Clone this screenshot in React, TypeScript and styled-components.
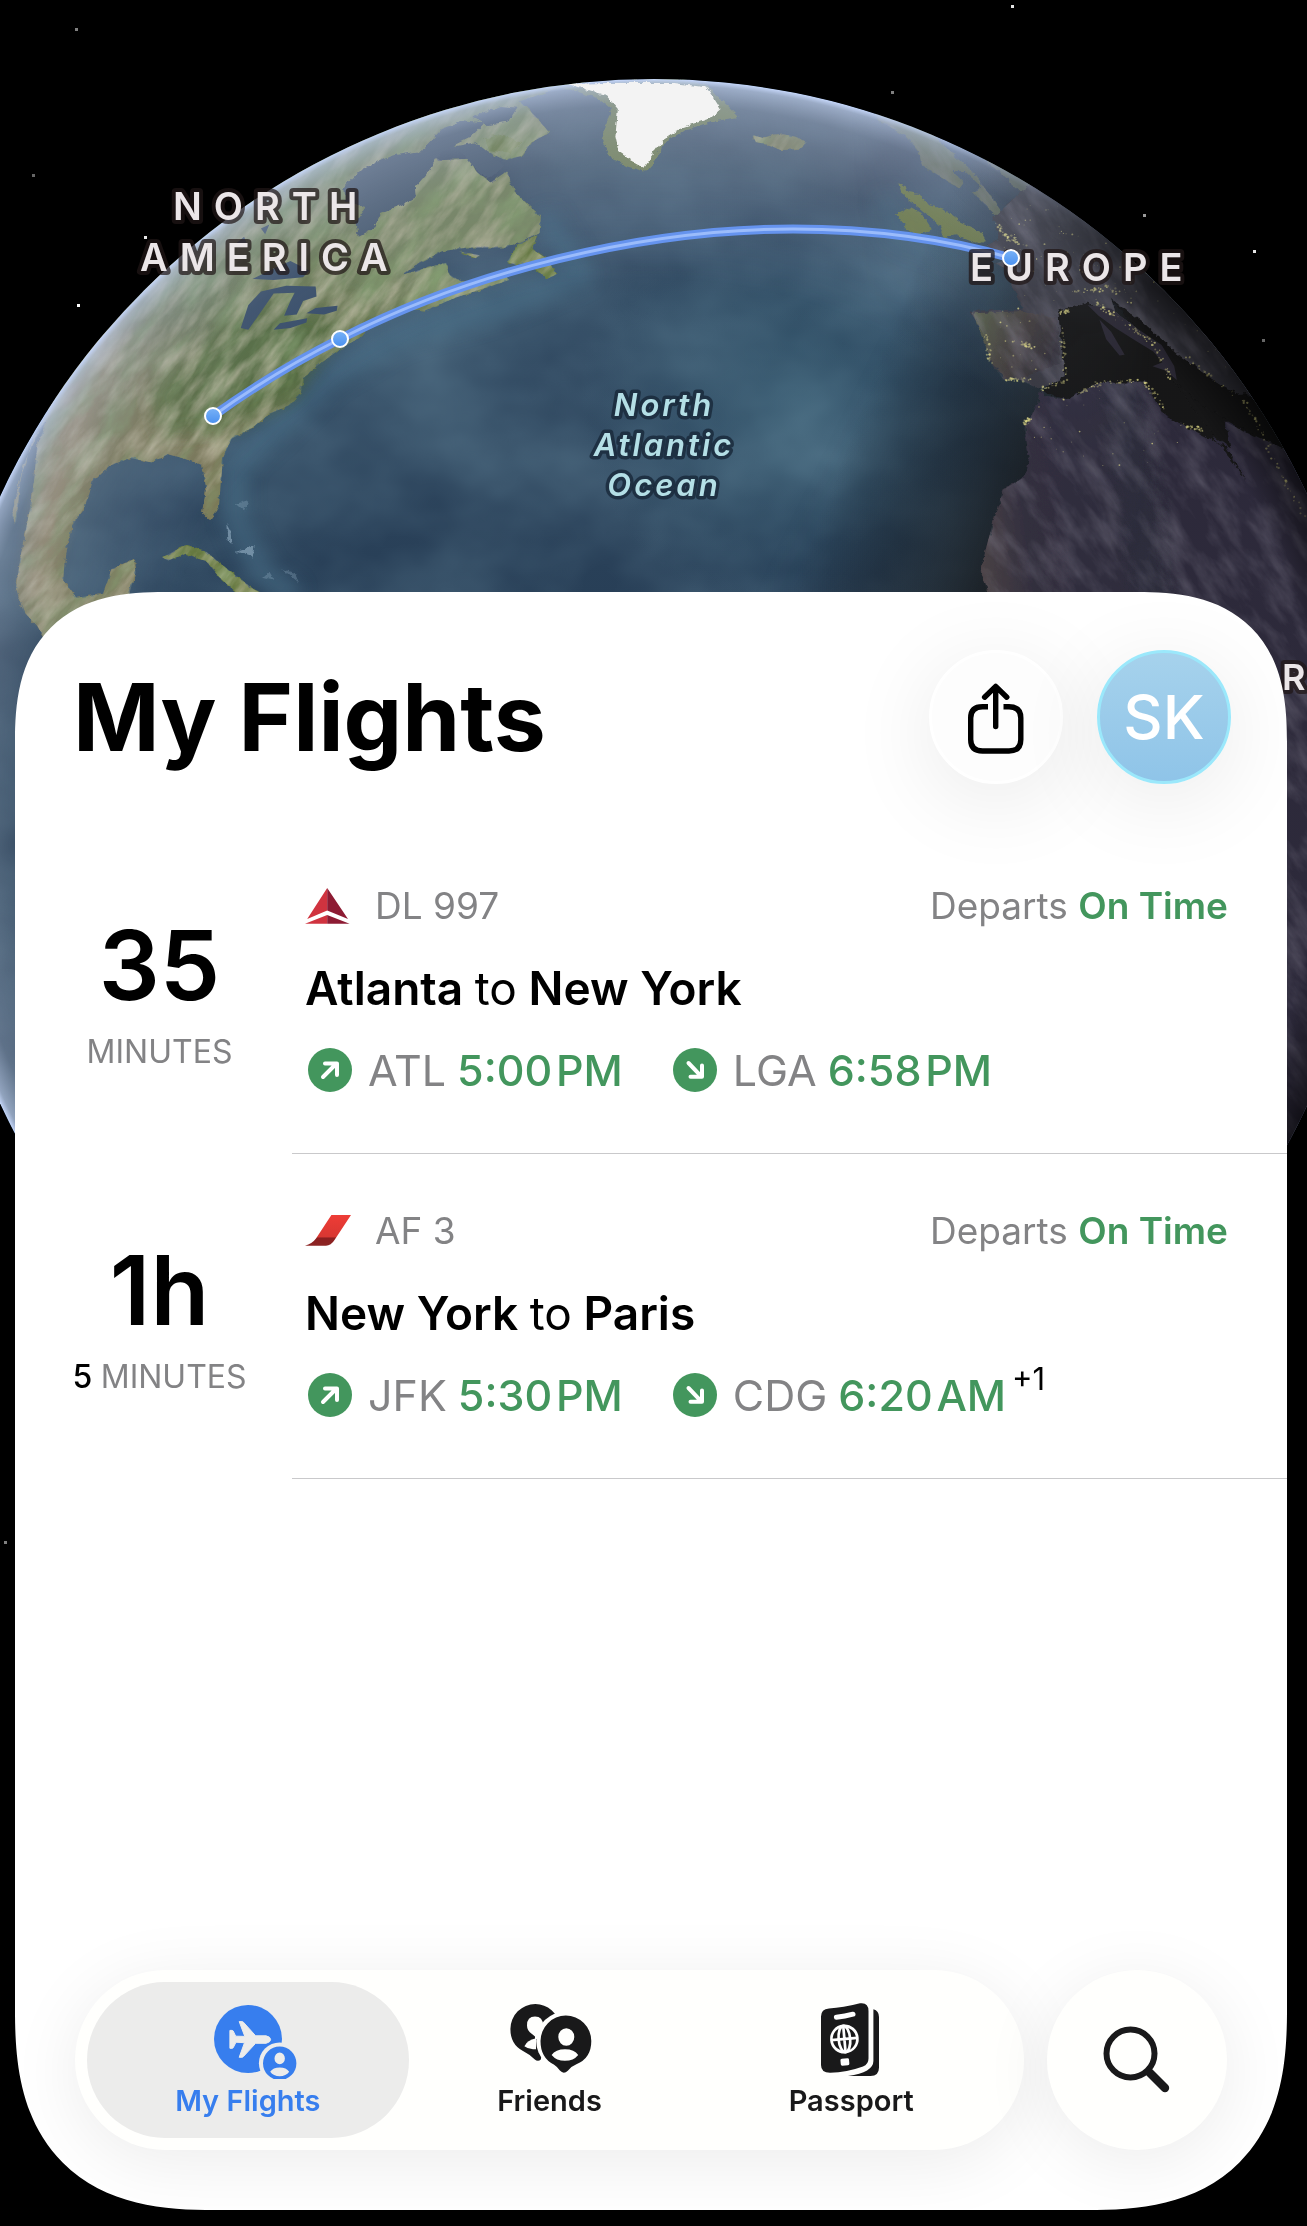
import React from 'react';
import styled, { createGlobalStyle } from 'styled-components';

const GREEN = '#43965d';
const GREY = '#838385';
const INK = '#19191a';

const GlobalStyle = createGlobalStyle`
  * { box-sizing: border-box; }
  body {
    margin: 0;
    background: #000;
    font-family: Inter, "Liberation Sans", sans-serif;
    color: #000;
  }
  button { font: inherit; color: inherit; border: 0; cursor: pointer; }
  a { color: inherit; text-decoration: none; }
`;

const Page = styled.main`
  position: relative;
  display: flex;
  flex-direction: column;
  min-height: 100vh;
  padding: 592px 20px 16px 15px;
  overflow: hidden;
`;

const Globe = styled.svg`
  position: absolute;
  top: 0;
  left: 50%;
  width: 1307px;
  height: 1600px;
  margin-left: -654px;
  overflow: visible;
`;

const Sheet = styled.section`
  position: relative;
  display: flex;
  flex: 1;
  flex-direction: column;
  padding: 58px 0 60px;
  background: #fff;
  overflow: hidden;
  border-radius: 115px 115px 150px 150px;
  @supports (corner-shape: superellipse(1.3)) {
    border-radius: 150px 150px 200px 200px;
    corner-shape: superellipse(1.35);
  }
`;

const Header = styled.header`
  display: flex;
  align-items: center;
  justify-content: space-between;
  padding: 0 56px 0 58px;
`;

const Title = styled.h1`
  margin: 0;
  font-size: 93px;
  line-height: 120px;
  font-weight: 700;
`;

const Actions = styled.div`
  display: flex;
  gap: 34px;
`;

const RoundButton = styled.button<{ $avatar?: boolean }>`
  display: flex;
  align-items: center;
  justify-content: center;
  width: 134px;
  height: 134px;
  padding: 0;
  border-radius: 50%;
  font-size: 61px;
  font-weight: 500;
  color: ${(p) => (p.$avatar ? '#fff' : '#000')};
  background: ${(p) => (p.$avatar ? 'linear-gradient(#a6d2ec, #8fc4e8)' : '#fdfdfd')};
  border: 3px solid ${(p) => (p.$avatar ? '#9be8fb' : '#fff')};
  box-shadow: 0 16px 90px rgba(0, 0, 0, 0.09);
`;

const List = styled.ul`
  margin: 45px 0 0;
  padding: 0;
  list-style: none;
`;

const Row = styled.li`
  display: grid;
  grid-template-columns: 277px 1fr;
`;

const Countdown = styled.div`
  display: flex;
  flex-direction: column;
  align-items: center;
  gap: 21px;
  padding: 88px 0 0 12px;
`;

const Big = styled.strong`
  font-size: 96px;
  line-height: 96px;
  font-weight: 600;
`;

const Unit = styled.span`
  font-size: 32px;
  line-height: 36px;
  color: ${GREY};
  b { font-weight: 500; color: #000; }
`;

const Body = styled.div`
  display: flex;
  flex-direction: column;
  gap: 32px;
  padding: 55px 59px 61px 13px;
  border-bottom: 1px solid #c9c9cb;
`;

const Meta = styled.div`
  display: flex;
  align-items: center;
  font-size: 37px;
  line-height: 44px;
  color: ${GREY};
`;

const Logo = styled.svg`
  width: 46px;
  height: 38px;
  margin-right: 24px;
`;

const Status = styled.span`
  margin-left: auto;
  b { font-weight: 600; color: ${GREEN}; }
`;

const Route = styled.h2`
  margin: 0;
  font-size: 46px;
  line-height: 56px;
  font-weight: 600;
  span { font-weight: 400; }
`;

const Legs = styled.div`
  display: flex;
  gap: 50px;
  padding-left: 3px;
`;

const Leg = styled.div`
  display: flex;
  align-items: center;
  font-size: 43px;
  line-height: 44px;
  color: ${GREY};
  time { margin-left: 11px; font-weight: 500; color: ${GREEN}; }
`;

const LegIcon = styled.svg`
  width: 44px;
  height: 44px;
  margin-right: 16px;
`;

const DayShift = styled.small`
  align-self: flex-start;
  margin-left: 6px;
  font-size: 31px;
  line-height: 12px;
  color: #000;
`;

const Dock = styled.div`
  display: flex;
  gap: 23px;
  margin-top: auto;
  padding: 0 60px;
`;

const Tabs = styled.nav`
  display: flex;
  flex: 1;
  height: 180px;
  padding: 12px;
  border-radius: 90px;
  background: #fffffd;
  box-shadow: 0 12px 70px rgba(0, 0, 0, 0.08);
`;

const Tab = styled.a<{ $active?: boolean }>`
  display: flex;
  flex: 1 1 0;
  flex-direction: column;
  align-items: center;
  gap: 5px;
  padding-top: 21px;
  border-radius: 78px;
  background: ${(p) => (p.$active ? '#ececeb' : 'transparent')};
  color: ${(p) => (p.$active ? '#377eee' : INK)};
  font-size: 29px;
  line-height: 34px;
  font-weight: 600;
  & + & { margin-left: -20px; }
  svg { width: 100px; height: 76px; }
`;

const SearchButton = styled.button`
  display: flex;
  align-items: center;
  justify-content: center;
  width: 180px;
  height: 180px;
  padding: 0;
  border-radius: 50%;
  background: #fffffd;
  color: ${INK};
  box-shadow: 0 12px 70px rgba(0, 0, 0, 0.08);
`;

const Continent = styled.text<{ $single?: boolean }>`
  font-family: Inter, "Liberation Sans", sans-serif;
  font-size: ${(p) => (p.$single ? 36 : 38)}px;
  font-weight: 600;
  letter-spacing: ${(p) => (p.$single ? 0 : 12)}px;
  fill: #ebe6e8;
  stroke: rgba(32, 22, 22, 0.72);
  stroke-width: 8px;
  stroke-linejoin: round;
  paint-order: stroke;
`;

const Ocean = styled.text`
  font-family: Inter, "Liberation Sans", sans-serif;
  font-size: 31px;
  font-style: italic;
  font-weight: 600;
  letter-spacing: 3px;
  text-anchor: middle;
  fill: #b4dfe6;
  stroke: rgba(26, 42, 60, 0.85);
  stroke-width: 7px;
  stroke-linejoin: round;
  paint-order: stroke;
`;

/* ---- globe drawing ---- */

const MAP_SCALE = 'translate(0 60) scale(0.4209 0.3827)';

const NORTH_AMERICA =
  'M-100,-100L1450,40L1330,72L1235,108L1275,150L1305,190L1262,215L1240,250L1200,262L1160,240L1100,232L1060,215L1010,235L1045,262L1115,258L1130,290L1165,320L1205,290L1222,345L1250,375L1285,410L1282,452L1240,472L1200,490L1110,490L1050,500L1000,528L955,562L1010,545L1060,530L1066,560L1100,580L1150,578L1195,556L1210,575L1140,600L1080,622L1010,655L960,650L900,672L862,720L800,762L752,800L720,832L715,870L690,900L640,925L600,960L550,990L530,1040L525,1100L520,1170L500,1202L480,1180L490,1120L480,1058L440,1042L400,1030L360,1052L310,1040L260,1060L220,1100L205,1160L170,1220L155,1290L150,1360L182,1405L245,1395L265,1330L318,1305L322,1340L300,1420L240,1600L130,1560L90,1480L55,1440L38,1380L50,1290L70,1180L82,1090L88,1010L112,940L80,985L50,1090L38,1210L28,1190L55,1060L100,950L140,860L-100,860Z';
const HUDSON =
  'M818,330L860,285L930,250L1000,238L1050,180L1100,160L1150,165L1120,200L1075,225L1035,258L1012,300L988,330L990,358L940,385L905,400L888,440L850,462L845,425L870,385L820,368Z M1120,150L1190,120L1230,125L1210,160L1160,170Z M1085,225L1130,215L1170,250L1200,275L1160,312L1130,285Z';
const LAKES =
  'M572,700L590,640L620,605L680,590L750,592L752,618L720,630L705,665L675,668L690,630L700,608L650,610L625,650L590,705Z M650,705L665,688L730,675L728,686L690,700Z M728,662L750,648L802,642L800,655L770,665Z M600,572L650,545L690,525L735,550L720,568L650,575Z M560,480L580,462L590,490Z M620,440L640,430L630,455Z';
const ISLANDS =
  'M1205,528L1232,480L1275,458L1265,495L1300,520L1322,560L1300,572L1255,530L1225,535Z M1090,500L1140,510L1130,518Z M385,1300L440,1268L490,1285L540,1330L605,1385L640,1400L560,1390L520,1350L490,1310L440,1290L400,1308Z M1150,205L1190,195L1240,215L1210,245L1160,235Z M1070,180L1090,165L1120,185Z';
const ICELAND = 'M1788,196L1812,204L1834,198L1862,194L1895,202L1916,216L1900,232L1856,236L1826,222L1796,214Z';
const BRITAIN =
  'M2132,322L2152,330L2156,345L2184,350L2204,378L2244,392L2284,425L2330,448L2342,470L2318,480L2270,458L2244,466L2232,430L2186,388L2140,348Z M2128,402L2164,385L2190,400L2214,442L2180,462L2156,440Z';
const SCANDINAVIA =
  'M2075,130L2088,158L2154,200L2184,240L2190,275L2242,310L2280,335L2290,320L2262,290L2292,290L2330,330L2312,348L2370,410L2395,415L2350,350L2310,290L2240,220L2205,180L2240,170L2320,240L2460,380L2600,360L2300,120Z';
const EUROPE =
  'M2360,412L2366,430L2372,470L2344,484L2396,520L2364,532L2390,545L2404,592L2430,652L2312,655L2308,662L2344,730L2349,782L2384,835L2424,836L2460,856L2496,850L2530,828L2530,770L2518,720L2530,690L2514,655L2552,650L2584,632L2610,655L2664,695L2704,720L2744,752L2764,795L2784,832L2760,760L2700,700L2650,660L2640,622L2720,700L2790,780L2850,850L2900,880L2960,870L3100,1000L3100,300L2440,330Z';
const AFRICA =
  'M2470,862L2464,905L2434,960L2444,1040L2434,1090L2384,1122L2364,1190L2344,1270L2330,1335L2348,1400L2420,1500L2500,2900L3400,2900L3200,1100L3040,1010L3010,975L2980,985L2912,945L2924,1015L2860,965L2812,950L2768,920L2752,870L2718,836L2674,846L2612,840L2572,862L2532,888L2484,876Z';
const GREENLAND =
  'M1330,68L1420,100L1452,128L1440,170L1430,210L1450,255L1490,278L1535,292L1560,262L1572,222L1622,186L1690,162L1755,148L1732,122L1700,92L1680,65L1600,46Z';
const MED =
  'M2514,655L2584,632L2664,695L2744,752L2784,832L2960,1100L2912,1010L2768,930L2718,836L2612,840L2532,888L2470,862L2496,850L2530,828Z M2640,625L2720,690L2800,770L2900,850L3000,900L3080,1030L2990,985L2850,900L2784,832L2764,780Z';
const ITALY =
  'M2584,640L2640,650L2700,700L2760,745L2790,800L2796,836L2770,812L2738,800L2762,790L2740,762L2700,735L2650,700L2610,668Z M2612,678L2640,710L2672,770L2660,772L2628,730Z';

const COAST_LIGHTS: number[][] = [
  [2370, 430, 2400, 480], [2380, 450, 2440, 490], [2550, 605, 2620, 600], [2590, 620, 2660, 680],
  [2660, 680, 2740, 740], [2740, 740, 2780, 830], [2518, 660, 2545, 655], [2520, 700, 2530, 820],
  [2344, 720, 2352, 790], [2390, 835, 2450, 835], [2470, 860, 2530, 840], [2565, 870, 2610, 845],
  [2610, 845, 2710, 835], [2720, 840, 2765, 910], [2810, 955, 2860, 965], [2810, 770, 2960, 900],
  [2435, 950, 2450, 930], [2560, 540, 2700, 640], [2960, 900, 3020, 1010], [3010, 1010, 3110, 1220],
  [2430, 740, 2450, 750],
];

function random(seed: number) {
  let s = seed;
  return () => {
    s = (s * 16807) % 2147483647;
    return s / 2147483647;
  };
}

const rnd = random(77);
const lights = COAST_LIGHTS.flatMap(([x1, y1, x2, y2]) =>
  Array.from({ length: 24 }, () => {
    const t = rnd();
    return {
      x: x1 + (x2 - x1) * t + (rnd() - 0.5) * 12,
      y: y1 + (y2 - y1) * t + (rnd() - 0.5) * 10,
      r: 1 + rnd() * 2.2,
      o: 0.25 + rnd() * 0.45,
    };
  }),
).concat(
  Array.from({ length: 230 }, () => ({
    x: 2370 + rnd() * 620,
    y: 380 + rnd() * 440,
    r: 0.8 + rnd() * 1.6,
    o: 0.2 + rnd() * 0.6,
  })).filter((p) => p.y < 610 || p.x < 2510 || p.x > 2760 + (p.y - 640) * 0.9),
  Array.from({ length: 36 }, () => ({
    x: 2450 + rnd() * 380,
    y: 860 + rnd() * 200,
    r: 0.8 + rnd() * 1.6,
    o: 0.2 + rnd() * 0.5,
  })).filter((p) => p.x < 2740 || p.y > 960),
);

const STARS = [
  [75, 28, 0.5], [1011, 5, 0.9], [891, 91, 0.5], [32, 174, 0.4], [144, 236, 0.9], [77, 304, 1],
  [1143, 214, 0.6], [1253, 250, 0.9], [1262, 339, 0.4], [4, 1541, 0.5], [1080, 220, 0.5],
];

const STOPS = [[213, 416], [340, 339], [1011, 258]];
const ARC = 'M213,416Q274,372 340,339C470,272 640,229 793,229C872,229 942,238 1011,258';

function Earth() {
  return (
    <Globe viewBox="0 0 1307 1600" role="img" aria-label="Flight map">
      <defs>
        <clipPath id="disc"><circle cx="654" cy="800" r="721" /></clipPath>
        <clipPath id="america"><path d={NORTH_AMERICA + ISLANDS + BRITAIN + ICELAND} transform={MAP_SCALE} /></clipPath>
        <clipPath id="nightLand"><path d={SCANDINAVIA + EUROPE + AFRICA} transform={MAP_SCALE} /></clipPath>
        <linearGradient id="sea" x1="0" y1="79" x2="0" y2="600" gradientUnits="userSpaceOnUse">
          <stop offset="0" stopColor="#56667f" />
          <stop offset="0.15" stopColor="#43546c" />
          <stop offset="0.42" stopColor="#2f475f" />
          <stop offset="1" stopColor="#283f57" />
        </linearGradient>
        <linearGradient id="land" x1="60" y1="600" x2="480" y2="100" gradientUnits="userSpaceOnUse">
          <stop offset="0" stopColor="#7a7757" />
          <stop offset="0.35" stopColor="#667550" />
          <stop offset="0.7" stopColor="#67764d" />
          <stop offset="1" stopColor="#758460" />
        </linearGradient>
        <linearGradient id="iberia" x1="2310" y1="660" x2="2530" y2="740" gradientUnits="userSpaceOnUse">
          <stop offset="0" stopColor="#5f6850" />
          <stop offset="0.5" stopColor="#4b4543" />
          <stop offset="1" stopColor="#33303a" />
        </linearGradient>
        <linearGradient id="africa" x1="2330" y1="1300" x2="2800" y2="1240" gradientUnits="userSpaceOnUse">
          <stop offset="0" stopColor="#53494d" />
          <stop offset="0.25" stopColor="#383445" />
          <stop offset="1" stopColor="#312f43" />
        </linearGradient>
        <radialGradient id="haze" cx="654" cy="800" r="721" gradientUnits="userSpaceOnUse">
          <stop offset="0.72" stopColor="#8b9cc4" stopOpacity="0" />
          <stop offset="0.88" stopColor="#929dae" stopOpacity="0.16" />
          <stop offset="0.965" stopColor="#a5b1c8" stopOpacity="0.42" />
          <stop offset="0.992" stopColor="#b5c4e0" stopOpacity="0.72" />
          <stop offset="1" stopColor="#c6d7fa" stopOpacity="1" />
        </radialGradient>
        <linearGradient id="day" x1="0" y1="0" x2="1307" y2="0" gradientUnits="userSpaceOnUse">
          <stop offset="0" stopColor="#fff" />
          <stop offset="0.65" stopColor="#fff" />
          <stop offset="0.76" stopColor="#aaa" />
          <stop offset="0.88" stopColor="#000" />
        </linearGradient>
        <mask id="daySide" maskUnits="userSpaceOnUse" x="-80" y="0" width="1500" height="1600">
          <rect x="-80" width="1500" height="1600" fill="url(#day)" />
        </mask>
        <linearGradient id="night" x1="900" y1="290" x2="1130" y2="402" gradientUnits="userSpaceOnUse">
          <stop offset="0" stopColor="#17181d" stopOpacity="0" />
          <stop offset="0.5" stopColor="#17181d" stopOpacity="0.35" />
          <stop offset="1" stopColor="#17171b" stopOpacity="0.55" />
        </linearGradient>
        <linearGradient id="seaNight" x1="880" y1="360" x2="1090" y2="440" gradientUnits="userSpaceOnUse">
          <stop offset="0" stopColor="#161b20" stopOpacity="0" />
          <stop offset="0.5" stopColor="#161b20" stopOpacity="0.5" />
          <stop offset="1" stopColor="#161616" stopOpacity="1" />
        </linearGradient>
        <radialGradient id="edge" cx="654" cy="800" r="721" gradientUnits="userSpaceOnUse">
          <stop offset="0.93" stopColor="#000" stopOpacity="0" />
          <stop offset="1" stopColor="#000" stopOpacity="0.6" />
        </radialGradient>
        <linearGradient id="dusk" x1="950" y1="0" x2="1150" y2="0" gradientUnits="userSpaceOnUse">
          <stop offset="0" stopColor="#000" />
          <stop offset="1" stopColor="#fff" />
        </linearGradient>
        <mask id="nightSide" maskUnits="userSpaceOnUse" x="-80" y="0" width="1500" height="1600">
          <rect x="-80" width="1500" height="1600" fill="url(#dusk)" />
        </mask>
        <radialGradient id="ridge" cx="800" cy="400" r="220" gradientUnits="userSpaceOnUse">
          <stop offset="0" stopColor="#345f74" stopOpacity="0.5" />
          <stop offset="1" stopColor="#345f74" stopOpacity="0" />
        </radialGradient>
        <filter id="coast" x="-5%" y="-5%" width="110%" height="110%">
          <feTurbulence type="fractalNoise" baseFrequency="0.06" numOctaves="4" seed="8" result="n" />
          <feDisplacementMap in="SourceGraphic" in2="n" scale="14" xChannelSelector="R" yChannelSelector="G" />
        </filter>
        <filter id="tanStreaks" x="0" y="0" width="100%" height="100%">
          <feTurbulence type="fractalNoise" baseFrequency="0.022 0.08" numOctaves="5" seed="4" />
          <feColorMatrix type="matrix" values="0 0 0 0 0.62  0 0 0 0 0.57  0 0 0 0 0.43  1.3 0 0 0 -0.5" />
        </filter>
        <filter id="darkStreaks" x="0" y="0" width="100%" height="100%">
          <feTurbulence type="fractalNoise" baseFrequency="0.02 0.05" numOctaves="5" seed="31" />
          <feColorMatrix type="matrix" values="0 0 0 0 0.24  0 0 0 0 0.36  0 0 0 0 0.16  0 1.5 0 0 -0.6" />
        </filter>
        <filter id="nightStreaks" x="0" y="0" width="100%" height="100%">
          <feTurbulence type="fractalNoise" baseFrequency="0.02 0.06" numOctaves="5" seed="12" />
          <feColorMatrix type="matrix" values="0 0 0 0 0.33  0 0 0 0 0.31  0 0 0 0 0.4  1.2 0 0 0 -0.48" />
        </filter>
        <filter id="seaTexture" x="0" y="0" width="100%" height="100%">
          <feTurbulence type="fractalNoise" baseFrequency="0.006 0.008" numOctaves="4" seed="21" />
          <feColorMatrix type="matrix" values="0 0 0 0 0.2  0 0 0 0 0.36  0 0 0 0 0.46  0.6 0 0 0 -0.15" />
        </filter>
        <filter id="soft" x="-30%" y="-30%" width="160%" height="160%"><feGaussianBlur stdDeviation="22" /></filter>
        <linearGradient id="pin" x1="0" y1="0" x2="0" y2="1">
          <stop offset="0" stopColor="#79b2f7" />
          <stop offset="1" stopColor="#4990f0" />
        </linearGradient>
      </defs>

      {STARS.map(([x, y, o]) => (
        <rect key={`${x}-${y}`} x={x} y={y} width="3" height="3" fill="#fff" opacity={o} />
      ))}

      <g clipPath="url(#disc)">
        <rect x="-80" y="60" width="1500" height="1500" fill="url(#sea)" />
        <circle cx="800" cy="400" r="220" fill="url(#ridge)" />
        <rect x="-80" y="79" width="1480" height="1200" filter="url(#seaTexture)" />
        <g transform={MAP_SCALE}>
          <g fill="none" stroke="#4a6f88" strokeWidth="60" strokeLinejoin="round" opacity="0.55" filter="url(#soft)">
            <path d="M1290,400L1380,560L1180,650L950,720L780,830L640,980L560,1060L560,1200L620,1340L700,1400" />
            <path d="M2100,350L2140,460L2300,520L2380,600" opacity="0.6" />
          </g>
        </g>
        <rect x="-80" y="60" width="1500" height="1500" fill="url(#seaNight)" />
        <g transform={MAP_SCALE} filter="url(#coast)">
          <path d={NORTH_AMERICA} fill="url(#land)" />
          <path d={ISLANDS} fill="#66793f" />
          <path d={BRITAIN} fill="#6f7d4e" />
          <path d={ICELAND} fill="#7d8164" />
          <path d={SCANDINAVIA} fill="#5f6b58" />
          <path d={EUROPE} fill="#3c3d47" />
          <path d={AFRICA} fill="url(#africa)" />
        </g>
        <g transform={MAP_SCALE}>
          <path d="M140,880L240,700L330,600L240,860L190,1060L150,1180L120,1330L90,1440L60,1380L90,1150Z" fill="#9b8768" opacity="0.7" filter="url(#soft)" />
          <path d="M350,860L600,640L820,680L700,880L560,960L380,980Z" fill="#4c6636" opacity="0.7" filter="url(#soft)" />
          <path d="M2312,662L2430,656L2510,675L2520,790L2430,830L2384,830L2352,780Z" fill="url(#iberia)" filter="url(#coast)" />
        </g>
        <g clipPath="url(#america)">
          <rect x="-500" y="-400" width="1400" height="1100" transform="rotate(-52 250 350)" filter="url(#darkStreaks)" />
          <rect x="-500" y="-400" width="1400" height="1100" transform="rotate(-52 250 350)" filter="url(#tanStreaks)" />
        </g>
        <g clipPath="url(#nightLand)" opacity="0.7">
          <rect x="300" y="-300" width="1600" height="1700" transform="rotate(55 1100 500)" filter="url(#nightStreaks)" />
        </g>
        <g transform={MAP_SCALE}>
          <path d={HUDSON} fill="#4a5b73" filter="url(#coast)" />
          <path d={LAKES} fill="#344a66" />
          <path d={MED} fill="#161616" filter="url(#coast)" />
          <path d={ITALY} fill="#2e2b38" />
          <path d={GREENLAND} fill="#7c8a66" filter="url(#coast)" />
          <g fill="#a9c4d8" opacity="0.5">
            <path d="M538,1210L548,1230L550,1265L540,1255Z M560,1285L605,1270L600,1300Z" filter="url(#coast)" />
            <path d="M620,1350L640,1340L650,1358Z M670,1330L700,1340L710,1365Z M560,1160L590,1150L580,1180Z" opacity="0.5" filter="url(#coast)" />
          </g>
        </g>
        <rect x="-80" y="60" width="1500" height="1500" fill="url(#night)" opacity="0.35" />
        <g transform={MAP_SCALE} fill="#e3dd8a">
          {lights.map((p, i) => (
            <circle key={i} cx={p.x} cy={p.y} r={p.r} opacity={p.o} />
          ))}
        </g>
        <circle cx="654" cy="800" r="721" fill="url(#haze)" mask="url(#daySide)" />
        <path
          transform={MAP_SCALE}
          filter="url(#coast)"
          d="M1350,62L1440,92L1468,128L1462,200L1470,240L1500,262L1530,280L1552,244L1575,210L1622,176L1690,150L1712,128L1680,72L1600,60L1450,60Z"
          fill="#f3f3f3"
        />
        <circle cx="654" cy="800" r="721" fill="url(#edge)" mask="url(#nightSide)" />
      </g>

      <path d={ARC} fill="none" stroke="#6593ee" strokeWidth="9" strokeLinecap="round" />
      <path d={ARC} fill="none" stroke="#9bbcfb" strokeWidth="3" strokeLinecap="round" />

      <Continent x="173" y="220">NORTH</Continent>
      <Continent x="140" y="271">AMERICA</Continent>
      <Continent x="970" y="281">EUROPE</Continent>
      <Continent $single x="1282" y="690">R</Continent>
      <Ocean x="664" y="416">North</Ocean>
      <Ocean x="664" y="456">Atlantic</Ocean>
      <Ocean x="664" y="496">Ocean</Ocean>

      {STOPS.map(([x, y]) => (
        <circle key={x} cx={x} cy={y} r="8" fill="url(#pin)" stroke="#fff" strokeWidth="2" />
      ))}
    </Globe>
  );
}

/* ---- icons ---- */

const ShareIcon = () => (
  <svg width="58" height="76" viewBox="0 -4 58 76" fill="none" stroke="currentColor" strokeWidth="5.4" strokeLinecap="round" strokeLinejoin="round" aria-hidden="true">
    <path strokeLinecap="butt" d="M21,23.8H15.5Q3.7,23.8 3.7,35V56.5Q3.7,68 15.5,68H42Q53.8,68 53.8,56.5V35Q53.8,23.8 42,23.8H36.5" />
    <path d="M28.7,4V43.5M17.6,14.2L28.7,3.4L39.8,14.2" />
  </svg>
);

const DeltaLogo = () => (
  <Logo viewBox="0 -1 46 38" aria-hidden="true">
    <path d="M22.2,0L2.2,31L22.2,22.6ZM0,35.7L22.2,27V35.7Z" fill="#d0333f" />
    <path d="M22.2,0L43,31L22.2,22.6ZM44.6,35.7L22.2,27V35.7Z" fill="#8d1b33" />
  </Logo>
);

const AirFranceLogo = () => (
  <Logo viewBox="0 -3 46 38" aria-hidden="true">
    <defs>
      <linearGradient id="af" x1="0" y1="0" x2="0" y2="1">
        <stop offset="0" stopColor="#ee3c36" />
        <stop offset="0.7" stopColor="#d93732" />
        <stop offset="0.76" stopColor="#8c1f20" />
        <stop offset="1" stopColor="#8c2524" />
      </linearGradient>
    </defs>
    <path d="M26.4,0H46L29.5,25Q26,30.7 21,30.7H0Q7,29 11,23.6Z" fill="url(#af)" />
  </Logo>
);

const ArrowBadge = ({ down }: { down?: boolean }) => (
  <LegIcon viewBox="0 0 44 44" aria-label={down ? 'Arrives' : 'Departs'}>
    <circle cx="22" cy="22" r="22" fill={GREEN} />
    <path
      d={down ? 'M15.5,15L28,28.2M29,17.5V28.8H17.5' : 'M15,29L28,16M17,15.5H29V27'}
      fill="none" stroke="#fff" strokeWidth="4" strokeLinecap="round" strokeLinejoin="round"
    />
  </LegIcon>
);

const FlightsIcon = () => (
  <svg viewBox="-16 -2 100 76" aria-hidden="true">
    <mask id="flightCut" maskUnits="userSpaceOnUse" x="-16" y="-2" width="100" height="76">
      <rect x="-16" y="-2" width="100" height="76" fill="#fff" />
      <circle cx="65.7" cy="58.3" r="20.8" />
      <path stroke="#000" strokeWidth="1" strokeLinejoin="round" d="M52,30.8H41.6L29.4,17.2Q28.8,16.6 27.9,16.6H25.2L30.8,31.4L21.7,31.2L19.2,26Q18.9,25.4 18,25.4H15.9V43.3H18Q18.9,43.3 19.2,42.7L22,37.2L30.5,37.7L25.2,52.3H27.9Q28.8,52.3 29.4,51.6L41.6,38.3H52Q56.6,37.2 56.6,34.6Q56.6,31.8 52,30.8Z" />
    </mask>
    <circle cx="34" cy="34" r="34" fill="currentColor" mask="url(#flightCut)" />
    <path fillRule="evenodd" fill="currentColor" d="M49,58.3a16.7,16.7 0 1 0 33.4,0a16.7,16.7 0 1 0 -33.4,0ZM60.5,53.4a5.2,5.8 0 1 1 10.4,0a5.2,5.8 0 1 1 -10.4,0ZM56.2,66.8Q59,62.4 65.7,62.4Q72.4,62.4 75.2,66.8Q72,71.2 65.7,71.2Q59.4,71.2 56.2,66.8Z" />
  </svg>
);

const FriendsIcon = () => (
  <svg viewBox="-9 0 100 76" aria-hidden="true">
    <mask id="friendCut" maskUnits="userSpaceOnUse" x="-9" y="0" width="100" height="76">
      <rect x="-9" width="100" height="76" fill="#fff" />
      <circle cx="56.8" cy="38" r="29.6" />
      <path d="M18,22.5Q18,13.6 26,13.6Q34,13.6 34,22.5Q34,28 31,31.5V36H26V33.5L23,31Q18,28 18,22.5Z" />
      <path d="M15.4,43.2Q18,37 27,35.2V46.2H24Q18.5,45.8 15.4,43.2Z" />
    </mask>
    <path mask="url(#friendCut)" fill="currentColor" d="M26.4,1A25,25 0 0 0 1.4,26Q1.4,41.5 14,48Q21,51.6 25.5,56.2Q29,59.2 31.8,56.5L33,50A25,25 0 0 0 26.4,1Z" />
    <path fillRule="evenodd" fill="currentColor" d="M56.8,12.6A25.5,25.5 0 0 1 82.3,38.1Q82.3,55.5 67.4,61.2Q62.5,63 58.8,67.8Q54.6,71.6 50.9,67.6Q48,63.6 44.8,61.6Q31.5,55 31.5,38.1A25.5,25.5 0 0 1 56.8,12.6ZM49.3,34a8,8.8 0 1 0 16,0a8,8.8 0 1 0 -16,0ZM42.6,51.9Q46.5,46.3 56,46.3Q65.5,46.3 69.2,51.9Q64.5,57.8 56,57.8Q47.5,57.8 42.6,51.9Z" />
  </svg>
);

const PassportIcon = () => (
  <svg viewBox="-20 0 100 76" fill="none" aria-hidden="true">
    <path fill="currentColor" d="M8,5.4Q22,4.8 39,0.3Q47.5,-0.8 47.5,8V55.6Q47.5,61.5 42,63.6Q26,69.4 9,69.8Q0,69.8 0,62V13.5Q0,6 8,5.4Z" />
    <path fill="currentColor" d="M52.4,6.2Q58,7.8 58,14V64.5Q58,73 49.5,73H27Q52.4,69.4 52.4,58Z" />
    <g stroke="#fff">
      <path d="M15.4,14.2Q24,13.5 32,11.2" strokeWidth="5" strokeLinecap="round" />
      <g strokeWidth="2.7" transform="rotate(-5 23.4 36)">
        <ellipse cx="23.4" cy="36" rx="13" ry="13.2" />
        <ellipse cx="23.4" cy="36" rx="5.8" ry="13.2" />
        <path d="M23.4,22.8V49.2M10.4,36H36.4" />
      </g>
    </g>
    <rect x="19.6" y="55.4" width="8.6" height="7" rx="1.5" fill="#fff" transform="rotate(-5 24 59)" />
  </svg>
);

const SearchIcon = () => (
  <svg width="68" height="68" viewBox="0 0 68 68" fill="none" stroke="currentColor" aria-hidden="true">
    <circle cx="27.5" cy="27.5" r="24" strokeWidth="6" />
    <path d="M46,46L62,62" strokeWidth="8.4" strokeLinecap="round" />
  </svg>
);

/* ---- data ---- */

const FLIGHTS = [
  { big: '35', lead: '', logo: <DeltaLogo />, code: 'DL 997', from: 'Atlanta', to: 'New York', a: 'ATL', at: '5:00\u200aPM', b: 'LGA', bt: '6:58\u200aPM', shift: '' },
  { big: '1h', lead: '5', logo: <AirFranceLogo />, code: 'AF 3', from: 'New York', to: 'Paris', a: 'JFK', at: '5:30\u200aPM', b: 'CDG', bt: '6:20\u200aAM', shift: '+1' },
];

export default function App() {
  return (
    <>
      <GlobalStyle />
      <Page>
        <Earth />
        <Sheet>
          <Header>
            <Title>My Flights</Title>
            <Actions>
              <RoundButton aria-label="Share"><ShareIcon /></RoundButton>
              <RoundButton $avatar>SK</RoundButton>
            </Actions>
          </Header>
          <List>
            {FLIGHTS.map((f) => (
              <Row key={f.code}>
                <Countdown>
                  <Big>{f.big}</Big>
                  <Unit>{f.lead && <b>{f.lead} </b>}MINUTES</Unit>
                </Countdown>
                <Body>
                  <Meta>
                    {f.logo}
                    {f.code}
                    <Status>Departs <b>On Time</b></Status>
                  </Meta>
                  <Route>{f.from} <span>to</span> {f.to}</Route>
                  <Legs>
                    <Leg><ArrowBadge />{f.a}<time>{f.at}</time></Leg>
                    <Leg><ArrowBadge down />{f.b}<time>{f.bt}</time>{f.shift && <DayShift>{f.shift}</DayShift>}</Leg>
                  </Legs>
                </Body>
              </Row>
            ))}
          </List>
          <Dock>
            <Tabs>
              <Tab href="#flights" $active><FlightsIcon />My Flights</Tab>
              <Tab href="#friends"><FriendsIcon />Friends</Tab>
              <Tab href="#passport"><PassportIcon />Passport</Tab>
            </Tabs>
            <SearchButton aria-label="Search"><SearchIcon /></SearchButton>
          </Dock>
        </Sheet>
      </Page>
    </>
  );
}
